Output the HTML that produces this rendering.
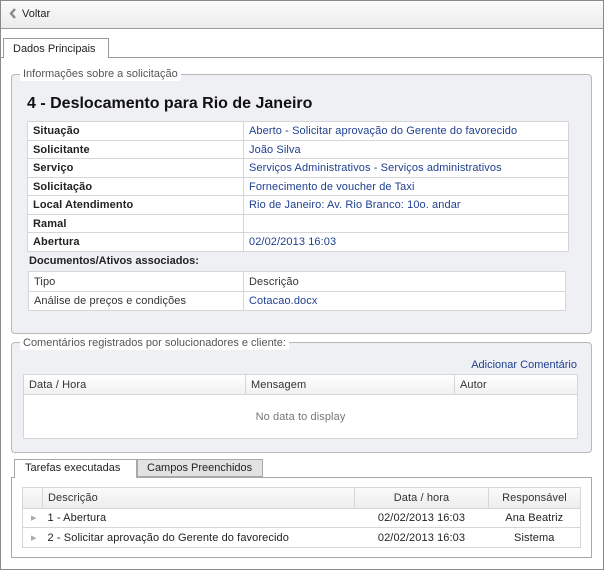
<!DOCTYPE html>
<html><head><meta charset="utf-8"><style>
*{margin:0;padding:0;box-sizing:border-box}
body{width:604px;height:570px;position:relative;background:#fff;font-family:"Liberation Sans",Tahoma,sans-serif;font-size:11px;color:#222;overflow:hidden}
.a{position:absolute}
.t{position:absolute;white-space:nowrap;line-height:13px}
.lnk{color:#1f3f8f}
table{position:absolute;border-collapse:collapse;background:#fff}
td{border:1px solid #d6d6d6;padding:0 5px;white-space:nowrap;font-size:11px;overflow:hidden;letter-spacing:0.1px}
.g{color:#333}
</style></head><body>
<div class="a" style="left:0;top:0;width:604px;height:570px;border:1px solid #8a8a8a"></div>
<div class="a" style="left:1px;top:1px;width:602px;height:28px;background:linear-gradient(#fbfbfb,#ececec);border-bottom:1px solid #9a9a9a"></div>
<svg class="a" style="left:9px;top:8px" width="8" height="11"><path d="M6 1L2 5.5L6 10" stroke="#888" stroke-width="2.4" fill="none"/></svg>
<div class="t" style="left:22px;top:8px">Voltar</div>
<div class="a" style="left:1px;top:57px;width:602px;height:512px;border-top:1px solid #9a9a9a"></div>
<div class="a" style="left:3px;top:38px;width:106px;height:20px;background:#fff;border:1px solid #9a9a9a;border-bottom:none"></div>
<div class="t" style="left:13px;top:43px">Dados Principais</div>
<div class="a" style="left:11px;top:74px;width:581px;height:260px;background:#eef0f4;border:1px solid #b8b8b8;border-radius:4px"></div>
<div class="t" style="left:20px;top:68px;background:#fff;padding:0 3px;color:#555">Informações sobre a solicitação</div>
<div class="t" style="left:27px;top:95px;font-size:16px;font-weight:bold;line-height:18px;color:#111">4 - Deslocamento para Rio de Janeiro</div>
<table style="left:27px;top:121px;width:542px;border:1px solid #aaa">
<colgroup><col style="width:216px"><col></colgroup>
<tr style="height:19px"><td><b>Situação</b></td><td class="lnk">Aberto - Solicitar aprovação do Gerente do favorecido</td></tr>
<tr style="height:18px"><td><b>Solicitante</b></td><td class="lnk">João Silva</td></tr>
<tr style="height:19px"><td><b>Serviço</b></td><td class="lnk">Serviços Administrativos - Serviços administrativos</td></tr>
<tr style="height:18px"><td><b>Solicitação</b></td><td class="lnk">Fornecimento de voucher de Taxi</td></tr>
<tr style="height:19px"><td><b>Local Atendimento</b></td><td class="lnk">Rio de Janeiro: Av. Rio Branco: 10o. andar</td></tr>
<tr style="height:18px"><td><b>Ramal</b></td><td></td></tr>
<tr style="height:19px"><td><b>Abertura</b></td><td class="lnk">02/02/2013 16:03</td></tr>
</table>
<div class="t" style="left:29px;top:255px;font-weight:bold">Documentos/Ativos associados:</div>
<table style="left:28px;top:271px;width:538px;border:1px solid #aaa">
<colgroup><col style="width:215px"><col></colgroup>
<tr style="height:20px"><td class="g">Tipo</td><td class="g">Descrição</td></tr>
<tr style="height:19px"><td class="g">Análise de preços e condições</td><td class="lnk">Cotacao.docx</td></tr>
</table>
<div class="a" style="left:11px;top:342px;width:581px;height:111px;background:#eef0f4;border:1px solid #b8b8b8;border-radius:4px"></div>
<div class="t" style="left:20px;top:337px;background:#fff;padding:0 3px;color:#555">Comentários registrados por solucionadores e cliente:</div>
<div class="t lnk" style="right:27px;top:359px">Adicionar Comentário</div>
<table style="left:23px;top:374px;width:555px;border:1px solid #aaa">
<colgroup><col style="width:222px"><col style="width:209px"><col></colgroup>
<tr style="height:20px;background:linear-gradient(#fff,#f0f0f0)"><td class="g">Data / Hora</td><td class="g">Mensagem</td><td class="g">Autor</td></tr>
<tr style="height:44px"><td colspan="3" style="text-align:center;color:#777">No data to display</td></tr>
</table>
<div class="a" style="left:11px;top:477px;width:581px;height:81px;border:1px solid #a8a8a8"></div>
<div class="a" style="left:14px;top:459px;width:123px;height:19px;background:#fff;border:1px solid #a8a8a8;border-bottom:none"></div>
<div class="t" style="left:25px;top:462px">Tarefas executadas</div>
<div class="a" style="left:137px;top:459px;width:126px;height:18px;background:#e2e2e2;border:1px solid #a8a8a8"></div>
<div class="t" style="left:147px;top:462px">Campos Preenchidos</div>
<table style="left:22px;top:487px;width:559px;border:1px solid #999">
<colgroup><col style="width:20px"><col style="width:312px"><col style="width:134px"><col></colgroup>
<tr style="height:21px;background:linear-gradient(#fafafa,#ececec)"><td></td><td class="g">Descrição</td><td class="g" style="text-align:center">Data / hora</td><td class="g" style="text-align:center">Responsável</td></tr>
<tr style="height:19px"><td style="border-right:none;color:#aaa;font-size:7px;padding-left:8px">▶</td><td style="border-left:none;border-right:none">1 - Abertura</td><td style="text-align:center;border-left:none;border-right:none">02/02/2013 16:03</td><td style="text-align:center;border-left:none">Ana Beatriz</td></tr>
<tr style="height:20px"><td style="border-right:none;color:#aaa;font-size:7px;padding-left:8px">▶</td><td style="border-left:none;border-right:none">2 - Solicitar aprovação do Gerente do favorecido</td><td style="text-align:center;border-left:none;border-right:none">02/02/2013 16:03</td><td style="text-align:center;border-left:none">Sistema</td></tr>
</table>
</body></html>
